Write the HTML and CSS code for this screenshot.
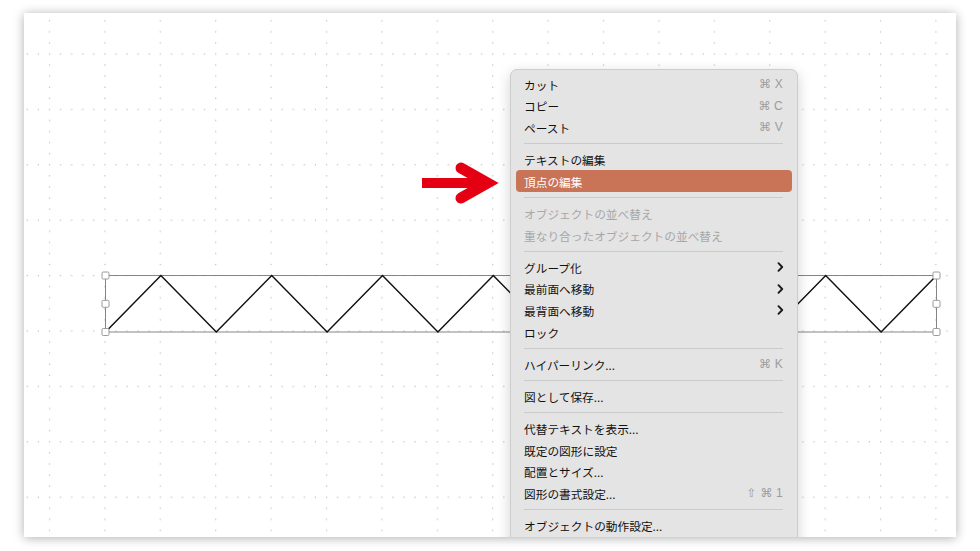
FILE: index.html
```html
<!DOCTYPE html>
<html lang="ja">
<head>
<meta charset="utf-8">
<title>頂点の編集</title>
<link rel="stylesheet" href="styles.css">
</head>
<body>
<div class="page">
  <svg class="canvas" width="932" height="524" viewBox="0 0 932 524" xmlns="http://www.w3.org/2000/svg">
    <defs>
      <pattern id="grid" x="24.9" y="40.4" width="55.4" height="55.4" patternUnits="userSpaceOnUse">
        <g fill="#bcbcbc">
          <rect x="0" y="0" width="1.2" height="1.2"/>
          <rect x="11.08" y="0" width="1.2" height="1.2"/>
          <rect x="22.16" y="0" width="1.2" height="1.2"/>
          <rect x="33.24" y="0" width="1.2" height="1.2"/>
          <rect x="44.32" y="0" width="1.2" height="1.2"/>
          <rect x="0" y="11.08" width="1.2" height="1.2"/>
          <rect x="0" y="22.16" width="1.2" height="1.2"/>
          <rect x="0" y="33.24" width="1.2" height="1.2"/>
          <rect x="0" y="44.32" width="1.2" height="1.2"/>
        </g>
      </pattern>
    </defs>
    <rect x="0" y="0" width="932" height="524" fill="url(#grid)"/>
    <rect class="sel" x="81.5" y="262.5" width="831" height="56.5"/>
    <polyline class="zig" points="81.5,319 136.9,262.5 192.3,319 247.7,262.5 303.1,319 358.5,262.5 413.9,319 469.3,262.5 524.7,319 580.1,262.5 635.5,319 690.9,262.5 746.3,319 801.7,262.5 857.1,319 912.5,262.5"/>
    <g class="handle">
      <rect x="78" y="259" width="7" height="7" rx="1.2"/>
      <rect x="78" y="287.3" width="7" height="7" rx="1.2"/>
      <rect x="78" y="315.5" width="7" height="7" rx="1.2"/>
      <rect x="909" y="259" width="7" height="7" rx="1.2"/>
      <rect x="909" y="287.3" width="7" height="7" rx="1.2"/>
      <rect x="909" y="315.5" width="7" height="7" rx="1.2"/>
      <rect x="493.5" y="259" width="7" height="7" rx="1.2"/>
      <rect x="493.5" y="315.5" width="7" height="7" rx="1.2"/>
    </g>
    <g class="arrow">
      <rect x="398" y="165" width="64" height="10" fill="#e40012"/>
      <polyline points="437,155 463.5,170 437,185" fill="none" stroke="#e40012" stroke-width="11" stroke-linecap="round" stroke-linejoin="miter" stroke-miterlimit="10"/>
    </g>
  </svg>

  <div class="menu">
    <div class="item"><span>カット</span><span class="key">⌘ X</span></div>
    <div class="item"><span>コピー</span><span class="key">⌘ C</span></div>
    <div class="item"><span>ペースト</span><span class="key">⌘ V</span></div>
    <div class="sep"></div>
    <div class="item"><span>テキストの編集</span></div>
    <div class="item active"><span>頂点の編集</span></div>
    <div class="sep"></div>
    <div class="item disabled"><span>オブジェクトの並べ替え</span></div>
    <div class="item disabled"><span>重なり合ったオブジェクトの並べ替え</span></div>
    <div class="sep"></div>
    <div class="item"><span>グループ化</span><svg class="chev" width="7" height="10" viewBox="0 0 7 10"><polyline points="1.5,1.2 5.2,5 1.5,8.8"/></svg></div>
    <div class="item"><span>最前面へ移動</span><svg class="chev" width="7" height="10" viewBox="0 0 7 10"><polyline points="1.5,1.2 5.2,5 1.5,8.8"/></svg></div>
    <div class="item"><span>最背面へ移動</span><svg class="chev" width="7" height="10" viewBox="0 0 7 10"><polyline points="1.5,1.2 5.2,5 1.5,8.8"/></svg></div>
    <div class="item"><span>ロック</span></div>
    <div class="sep"></div>
    <div class="item"><span>ハイパーリンク...</span><span class="key">⌘ K</span></div>
    <div class="sep"></div>
    <div class="item"><span>図として保存...</span></div>
    <div class="sep"></div>
    <div class="item"><span>代替テキストを表示...</span></div>
    <div class="item"><span>既定の図形に設定</span></div>
    <div class="item"><span>配置とサイズ...</span></div>
    <div class="item"><span>図形の書式設定...</span><span class="key">⇧ ⌘ 1</span></div>
    <div class="sep"></div>
    <div class="item"><span>オブジェクトの動作設定...</span></div>
  </div>
</div>
</body>
</html>
```

FILE: styles.css
```css
html, body {
  margin: 0;
  padding: 0;
  background: #ffffff;
}

body {
  width: 980px;
  height: 551px;
  overflow: hidden;
  padding-top: 13px;
  box-sizing: border-box;
}

.page {
  position: relative;
  margin-left: 24px;
  width: 932px;
  height: 524px;
  background: #ffffff;
  box-shadow: 0 1px 10px rgba(0, 0, 0, 0.32);
  overflow: hidden;
}

.canvas {
  display: block;
}

.sel {
  fill: none;
  stroke: #858585;
  stroke-width: 1;
}

.zig {
  fill: none;
  stroke: #111111;
  stroke-width: 1.5;
  stroke-linejoin: miter;
}

.handle rect {
  fill: #ffffff;
  stroke: #9a9a9a;
  stroke-width: 1;
}

.menu {
  position: absolute;
  left: 486px;
  top: 55.5px;
  width: 288px;
  height: 520px;
  box-sizing: border-box;
  padding: 4px 5px;
  background: #e4e4e4;
  border: 1px solid #cdcdcd;
  border-radius: 7px;
  box-shadow: 0 4px 14px rgba(0, 0, 0, 0.18);
  font-family: "Noto Sans CJK JP", "Noto Sans", sans-serif;
  font-size: 11.7px;
  font-weight: 400;
  color: #111111;
}

.item {
  display: flex;
  align-items: center;
  justify-content: space-between;
  height: 21.6px;
  padding: 0 9px 0 8px;
  border-radius: 4px;
  white-space: nowrap;
}

.item.active {
  background: #c97457;
  color: #ffffff;
}

.item.disabled {
  color: #a7a7a7;
}

.key {
  font-family: "Liberation Sans", "DejaVu Sans", sans-serif;
  font-size: 12px;
  font-weight: 400;
  color: #9c9c9c;
  letter-spacing: 0.2px;
}

.chev {
  display: block;
  margin-right: -1px;
}

.chev polyline {
  fill: none;
  stroke: #1a1a1a;
  stroke-width: 1.9;
  stroke-linecap: round;
  stroke-linejoin: round;
}

.sep {
  height: 1px;
  margin: 4.8px 9px 4.8px 8px;
  background: #cacaca;
}
```
